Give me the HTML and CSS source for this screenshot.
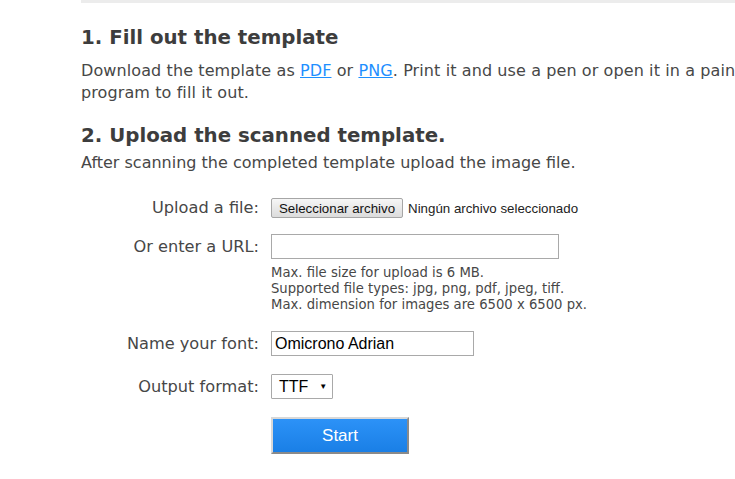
FILE: index.html
```html
<!DOCTYPE html>
<html lang="en">
<head>
<meta charset="utf-8">
<title>Upload template</title>
<link rel="stylesheet" href="styles.css">
</head>
<body>
<div class="page">
  <div class="topbar"></div>
  <section class="step step-one">
    <h2 class="step-title">1. Fill out the template</h2>
    <p class="step-text">Download the template as <a href="#">PDF</a> or <a href="#">PNG</a>. Print it and use a pen or open it in a paint program to fill it out.</p>
  </section>
  <section class="step step-two">
    <h2 class="step-title">2. Upload the scanned template.</h2>
    <p class="step-text">After scanning the completed template upload the image file.</p>
    <form class="form">
      <div class="row row-file">
        <label class="label">Upload a file:</label>
        <button type="button" class="file-btn">Seleccionar archivo</button>
        <span class="file-status">Ningún archivo seleccionado</span>
      </div>

      <div class="row row-url">
        <label class="label">Or enter a URL:</label>
        <input class="text-input url-input" type="text">
      </div>

      <p class="hint">Max. file size for upload is 6 MB.<br>Supported file types: jpg, png, pdf, jpeg, tiff.<br>Max. dimension for images are 6500 x 6500 px.</p>

      <div class="row row-name">
        <label class="label">Name your font:</label>
        <input class="text-input name-input" type="text" value="Omicrono Adrian">
      </div>

      <div class="row row-format">
        <label class="label">Output format:</label>
        <div class="select"><span>TTF</span><span class="caret">▼</span></div>
      </div>

      <div class="row row-start">
        <span class="label"></span>
        <button type="button" class="start-btn">Start</button>
      </div>
    </form>
  </section>
</div>
</body>
</html>
```
FILE: styles.css
```css
html, body {
  margin: 0;
  padding: 0;
  background: #fff;
}
body {
  font-family: "DejaVu Sans", Verdana, sans-serif;
  color: #474747;
}
.page {
  width: 735px;
  height: 479px;
  overflow: hidden;
}
.topbar {
  margin-left: 81px;
  height: 3px;
  background: #ececec;
}
.step {
  margin-left: 81px;
}
.step-title {
  margin: 0;
  font-weight: bold;
  font-size: 19.8px;
  line-height: 24px;
  color: #3d3d3d;
}
.step-one .step-title {
  margin-top: 23px;
}
.step-text {
  margin: 0;
  line-height: 22px;
}
.step-one .step-text {
  margin-top: 10px;
  width: 700px;
  font-size: 16px;
  letter-spacing: 0.1px;
}
.step-two .step-title {
  margin-top: 20px;
}
.step-two .step-text {
  margin-top: 4px;
  font-size: 16px;
  white-space: nowrap;
}
a {
  color: #1e8fff;
  text-decoration: underline;
}
.form {
  margin-top: 24px;
}
.row {
  display: flex;
  align-items: center;
}
.label {
  flex: 0 0 178px;
  margin-right: 12px;
  text-align: right;
  font-size: 16.2px;
  line-height: 20px;
  color: #474747;
}
.row-file {
  height: 20px;
}
.row-url {
  margin-top: 16px;
}
.row-name {
  margin-top: 18px;
}
.row-format {
  margin-top: 18px;
}
.row-start {
  margin-top: 18px;
}
.file-btn {
  font-family: "Liberation Sans", Arial, sans-serif;
  font-size: 13.3px;
  height: 20px;
  padding: 0 7px;
  border: 1px solid #a6a6a6;
  border-radius: 2px;
  background: linear-gradient(#f6f6f6, #dcdcdc);
  color: #111;
}
.file-status {
  font-family: "Liberation Sans", Arial, sans-serif;
  font-size: 13.3px;
  color: #222;
  margin-left: 5px;
}
.text-input {
  display: block;
  box-sizing: border-box;
  height: 25px;
  border: 1px solid #a9a9a9;
  padding: 0 3px;
  font-family: "Liberation Sans", Arial, sans-serif;
  font-size: 16px;
  color: #000;
  outline: none;
  margin: 0;
}
.url-input {
  width: 288px;
}
.name-input {
  width: 203px;
}
.hint {
  margin: 6px 0 0 190px;
  font-size: 13.2px;
  line-height: 16px;
  color: #474747;
  white-space: nowrap;
}
.select {
  box-sizing: border-box;
  width: 62px;
  height: 25px;
  border: 1px solid #a9a9a9;
  border-radius: 1px;
  display: flex;
  align-items: center;
  padding-left: 7px;
  font-family: "Liberation Sans", Arial, sans-serif;
  font-size: 16px;
  color: #000;
}
.caret {
  font-size: 8px;
  margin-left: 11px;
}
.start-btn {
  box-sizing: border-box;
  width: 138px;
  height: 37px;
  border: 2px solid;
  border-color: #d8d8d8 #8a8a8a #8a8a8a #d8d8d8;
  background: linear-gradient(#2c92f7, #1a7fe6);
  color: #fff;
  font-family: "Liberation Sans", Arial, sans-serif;
  font-size: 17px;
  padding: 0;
}
```
